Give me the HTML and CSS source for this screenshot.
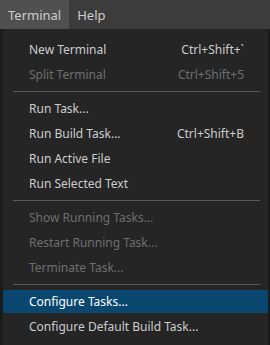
FILE: index.html
```html
<!DOCTYPE html>
<html lang="en">
<head>
    <meta charset="UTF-8" />
    <title>Terminal menu</title>
    <link rel="stylesheet" href="styles.css">
</head>
<body>
    <div class="menubar">
        <span class="menubar-item open">Terminal</span>
        <span class="menubar-item">Help</span>
    </div>
    <ul class="menu">
        <li class="item"><span>New Terminal</span><span class="key">Ctrl+Shift+`</span></li>
        <li class="item disabled"><span>Split Terminal</span><span class="key">Ctrl+Shift+5</span></li>
        <li class="separator"></li>
        <li class="item"><span>Run Task...</span></li>
        <li class="item"><span>Run Build Task...</span><span class="key">Ctrl+Shift+B</span></li>
        <li class="item"><span>Run Active File</span></li>
        <li class="item"><span>Run Selected Text</span></li>
        <li class="separator"></li>
        <li class="item disabled"><span>Show Running Tasks...</span></li>
        <li class="item disabled"><span>Restart Running Task...</span></li>
        <li class="item disabled"><span>Terminate Task...</span></li>
        <li class="separator"></li>
        <li class="item selected"><span>Configure Tasks...</span></li>
        <li class="item"><span>Configure Default Build Task...</span></li>
    </ul>
</body>
</html>
```

FILE: styles.css
```css
*,
*:before,
*:after{
    padding: 0;
    margin: 0;
    box-sizing: border-box;
}
body{
    width: 270px;
    height: 345px;
    background-color: #252526;
    font-family: "Noto Sans", "Open Sans", sans-serif;
    font-size: 12px;
    color: #cccccc;
    overflow: hidden;
}
.menubar{
    height: 29px;
    background-color: #3c3c3c;
    display: flex;
}
.menubar-item{
    display: flex;
    align-items: center;
    padding: 0 8px;
    font-size: 13px;
}
.menubar-item.open{
    background-color: #505050;
}
.menu{
    list-style: none;
    height: 316px;
    padding-top: 8px;
    display: flex;
    flex-direction: column;
    border-left: 3px solid #1b1b1b;
    border-right: 2px solid #1b1b1b;
}
.item{
    flex: none;
    height: 23px;
    margin: 1px 0;
    padding: 0 24px 0 26px;
    display: flex;
    align-items: center;
    justify-content: space-between;
    white-space: nowrap;
}
.item.disabled{
    color: #6e6e6e;
}
.item.selected{
    background-color: #094771;
    color: #ffffff;
}
.separator{
    flex: none;
    height: 1px;
    margin: 4px 8px 4px 10px;
    background-color: #5a5a5a;
}
```
